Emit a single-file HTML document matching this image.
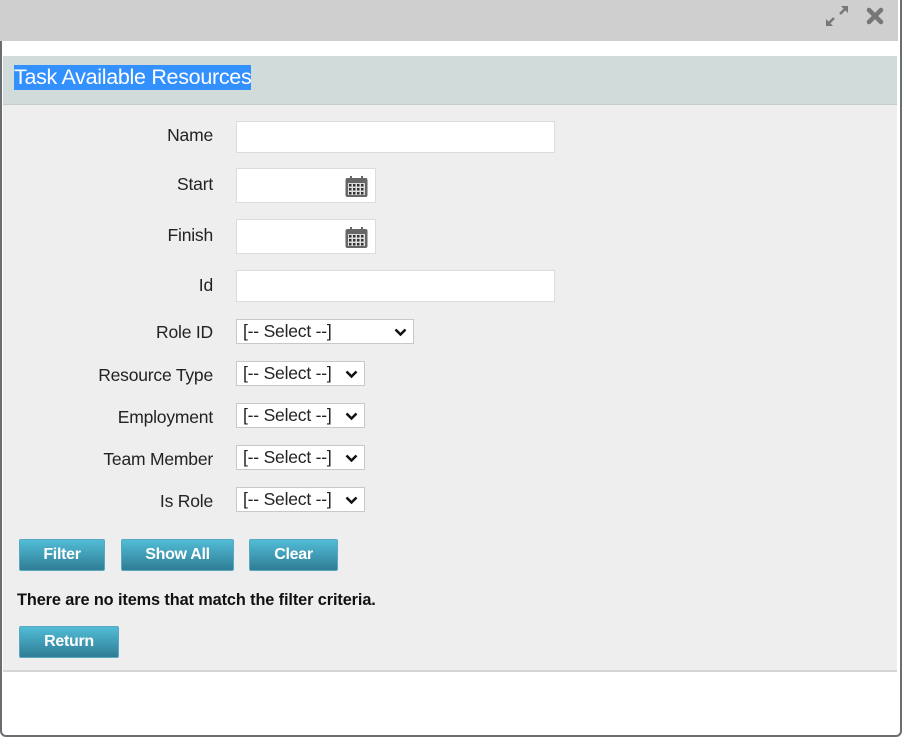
<!DOCTYPE html>
<html><head><style>
body{margin:0;width:902px;height:737px;background:#fff;font-family:"Liberation Sans",Arial,sans-serif;position:relative;overflow:hidden}
.frame{position:absolute;left:0;top:0;width:898px;height:735px;border:2px solid #6a6e73;border-top:none;border-radius:0 0 6px 6px;background:#fff}
.top{position:absolute;left:0;top:0;width:898px;height:41px;background:#cfcfcf}
.title{position:absolute;left:3px;top:56px;width:894px;height:48px;background:#d1dbd9;border-bottom:1px solid #c4ccca}
.title span{position:absolute;left:11px;top:9px;background:#3390ff;color:#fff;font-size:21.5px;line-height:25px;letter-spacing:-0.3px}
.content{position:absolute;left:3px;top:105px;width:894px;height:565px;background:#eeeeee;border-bottom:2px solid #d6d6d6}
.lbl{position:absolute;right:689px;font-size:17.5px;color:#222;text-align:right;white-space:nowrap;letter-spacing:-0.2px}
.inp{position:absolute;left:236px;background:#fff;border:1px solid #dcdcdc;box-sizing:border-box}
.sel{position:absolute;left:236px;background:#fff;border:1px solid #c8c8c8;box-sizing:border-box;font-size:17.5px;color:#222;padding-left:6px;line-height:22px;letter-spacing:-0.2px}
.sel svg{position:absolute;right:6px;top:8px}
.btn{position:absolute;height:32px;box-sizing:border-box;border:1px solid #5aa9c0;border-radius:2px;background:linear-gradient(#52bcd6,#2f7d94);color:#fff;font-weight:bold;font-size:16px;text-align:center;line-height:30px;letter-spacing:-0.3px}
.cal{position:absolute;right:7px;top:7px}
</style></head><body>
<div class="frame"></div>
<div class="top">
<svg style="position:absolute;left:825px;top:5px" width="24" height="22" viewBox="0 0 24 22"><g stroke="#777" stroke-width="2.5" fill="#777"><line x1="3" y1="19" x2="9" y2="13"/><line x1="21" y1="3" x2="15" y2="9"/></g><polygon points="1,21 1,14 8,21" fill="#777"/><polygon points="23,1 16,1 23,8" fill="#777"/></svg>
<svg style="position:absolute;left:866px;top:7px" width="18" height="18" viewBox="0 0 18 18"><g stroke="#777" stroke-width="4.5" stroke-linecap="round"><line x1="3" y1="3" x2="15" y2="15"/><line x1="15" y1="3" x2="3" y2="15"/></g></svg>
</div>
<div class="title"><span>Task Available Resources</span></div>
<div class="content"></div>

<div class="lbl" style="top:125px">Name</div>
<div class="inp" style="top:121px;width:319px;height:32px"></div>
<div class="lbl" style="top:174px">Start</div>
<div class="inp" style="top:168px;width:140px;height:35px"><svg class="cal" width="23" height="21" viewBox="0 0 23 21"><rect x="0.5" y="2" width="22" height="19" rx="2" fill="#666"/><rect x="5" y="0" width="2" height="4" fill="#666"/><rect x="16" y="0" width="2" height="4" fill="#666"/><rect x="3" y="7" width="17" height="12" fill="#ddd"/><g fill="#333"><rect x="4" y="8" width="2.5" height="2.5"/><rect x="8" y="8" width="2.5" height="2.5"/><rect x="12" y="8" width="2.5" height="2.5"/><rect x="16" y="8" width="2.5" height="2.5"/><rect x="4" y="12" width="2.5" height="2.5"/><rect x="8" y="12" width="2.5" height="2.5"/><rect x="12" y="12" width="2.5" height="2.5"/><rect x="16" y="12" width="2.5" height="2.5"/><rect x="4" y="16" width="2.5" height="2.5"/><rect x="8" y="16" width="2.5" height="2.5"/><rect x="12" y="16" width="2.5" height="2.5"/><rect x="16" y="16" width="2.5" height="2.5"/></g></svg></div>
<div class="lbl" style="top:225px">Finish</div>
<div class="inp" style="top:219px;width:140px;height:35px"><svg class="cal" width="23" height="21" viewBox="0 0 23 21"><rect x="0.5" y="2" width="22" height="19" rx="2" fill="#666"/><rect x="5" y="0" width="2" height="4" fill="#666"/><rect x="16" y="0" width="2" height="4" fill="#666"/><rect x="3" y="7" width="17" height="12" fill="#ddd"/><g fill="#333"><rect x="4" y="8" width="2.5" height="2.5"/><rect x="8" y="8" width="2.5" height="2.5"/><rect x="12" y="8" width="2.5" height="2.5"/><rect x="16" y="8" width="2.5" height="2.5"/><rect x="4" y="12" width="2.5" height="2.5"/><rect x="8" y="12" width="2.5" height="2.5"/><rect x="12" y="12" width="2.5" height="2.5"/><rect x="16" y="12" width="2.5" height="2.5"/><rect x="4" y="16" width="2.5" height="2.5"/><rect x="8" y="16" width="2.5" height="2.5"/><rect x="12" y="16" width="2.5" height="2.5"/><rect x="16" y="16" width="2.5" height="2.5"/></g></svg></div>
<div class="lbl" style="top:275px">Id</div>
<div class="inp" style="top:270px;width:319px;height:32px"></div>

<div class="lbl" style="top:322px">Role ID</div>
<div class="sel" style="top:319px;width:178px;height:25px">[-- Select --]<svg width="13" height="9" viewBox="0 0 13 9"><path d="M1.5 1.5 L6.5 6.5 L11.5 1.5" stroke="#111" stroke-width="2.5" fill="none"/></svg></div>
<div class="lbl" style="top:365px">Resource Type</div>
<div class="sel" style="top:361px;width:129px;height:25px">[-- Select --]<svg width="13" height="9" viewBox="0 0 13 9"><path d="M1.5 1.5 L6.5 6.5 L11.5 1.5" stroke="#111" stroke-width="2.5" fill="none"/></svg></div>
<div class="lbl" style="top:407px">Employment</div>
<div class="sel" style="top:403px;width:129px;height:25px">[-- Select --]<svg width="13" height="9" viewBox="0 0 13 9"><path d="M1.5 1.5 L6.5 6.5 L11.5 1.5" stroke="#111" stroke-width="2.5" fill="none"/></svg></div>
<div class="lbl" style="top:449px">Team Member</div>
<div class="sel" style="top:445px;width:129px;height:25px">[-- Select --]<svg width="13" height="9" viewBox="0 0 13 9"><path d="M1.5 1.5 L6.5 6.5 L11.5 1.5" stroke="#111" stroke-width="2.5" fill="none"/></svg></div>
<div class="lbl" style="top:491px">Is Role</div>
<div class="sel" style="top:487px;width:129px;height:25px">[-- Select --]<svg width="13" height="9" viewBox="0 0 13 9"><path d="M1.5 1.5 L6.5 6.5 L11.5 1.5" stroke="#111" stroke-width="2.5" fill="none"/></svg></div>

<div class="btn" style="left:19px;top:539px;width:86px">Filter</div>
<div class="btn" style="left:121px;top:539px;width:113px">Show All</div>
<div class="btn" style="left:249px;top:539px;width:89px">Clear</div>
<div style="position:absolute;left:17px;top:591px;font-size:16.3px;font-weight:bold;color:#111;letter-spacing:-0.1px">There are no items that match the filter criteria.</div>
<div class="btn" style="left:19px;top:626px;width:100px">Return</div>
</body></html>
